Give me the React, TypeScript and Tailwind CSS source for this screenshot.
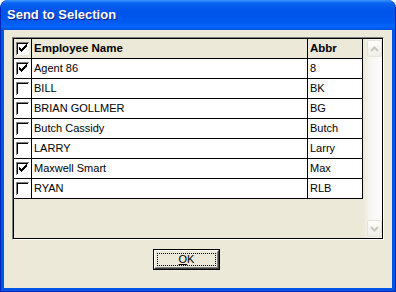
import React from 'react';

interface Employee {
  name: string;
  abbr: string;
  checked: boolean;
}

const employees: Employee[] = [
  { name: 'Agent 86', abbr: '8', checked: true },
  { name: 'BILL', abbr: 'BK', checked: false },
  { name: 'BRIAN GOLLMER', abbr: 'BG', checked: false },
  { name: 'Butch Cassidy', abbr: 'Butch', checked: false },
  { name: 'LARRY', abbr: 'Larry', checked: false },
  { name: 'Maxwell Smart', abbr: 'Max', checked: true },
  { name: 'RYAN', abbr: 'RLB', checked: false },
];

// classic 3px-tall check mark, one column at a time
const checkCols: [number, number][] = [
  [3, 5], [4, 6], [5, 7], [6, 6], [7, 5], [8, 4], [9, 3], [10, 2],
];

const CheckBox: React.FC<{ checked: boolean }> = ({ checked }) => (
  <svg width="13" height="13" viewBox="0 0 13 13" shapeRendering="crispEdges">
    <rect x="0" y="0" width="13" height="13" fill="#fff" />
    <rect x="0" y="0" width="13" height="1" fill="#808080" />
    <rect x="0" y="0" width="1" height="13" fill="#808080" />
    <rect x="1" y="1" width="11" height="1" fill="#000" />
    <rect x="1" y="1" width="1" height="11" fill="#000" />
    <rect x="1" y="12" width="12" height="1" fill="#fff" />
    <rect x="12" y="1" width="1" height="12" fill="#fff" />
    {checked &&
      checkCols.map(([x, y]) => <rect key={x} x={x} y={y} width="1" height="3" fill="#000" />)}
  </svg>
);

const ScrollButton: React.FC<{ dir: 'up' | 'down' }> = ({ dir }) => (
  <div className="w-[15px] h-[17px] rounded-[2px] border border-[#E6E4DA] bg-[linear-gradient(to_bottom,#FDFDFB,#EFEEE7)] flex items-center justify-center">
    <svg width="9" height="6" viewBox="0 0 9 6">
      <polyline
        points={dir === 'up' ? '1,5 4.5,1.5 8,5' : '1,1 4.5,4.5 8,1'}
        fill="none"
        stroke="#CAC8BB"
        strokeWidth="2"
      />
    </svg>
  </div>
);

export default function App() {
  return (
    <div className="w-[396px] h-[292px] bg-white font-['Liberation_Sans',Arial,sans-serif]">
      <div className="w-full h-full flex flex-col rounded-t-[8px] overflow-hidden bg-[#0055E5] border-x border-b border-[#0028B8]">
        {/* title bar */}
        <div className="h-[30px] shrink-0 flex items-center px-[6px] bg-[linear-gradient(to_bottom,#3D95FF_0%,#0A64F2_10%,#0054EA_35%,#0058EE_70%,#0366FA_90%,#0250E0_100%)]">
          <span className="text-white font-bold text-[13px] [text-shadow:1px_1px_0_#0A1E80]">
            Send to Selection
          </span>
        </div>

        {/* client area */}
        <div className="flex-1 mx-[3px] mb-[3px] bg-[#ECE9D8] flex flex-col pt-[7px] pl-[8px] pr-[8px] text-[11px] text-black">
          <div className="h-[203px] border border-t-[#808080] border-l-[#808080] border-b-white border-r-white">
            <div className="h-full border border-black flex">
              <div className="w-[349px] flex flex-col">
                <div className="h-[20px] flex border-b border-black">
                  <div className="w-[18px] border-r border-black flex items-center pl-[2px]">
                    <CheckBox checked={true} />
                  </div>
                  <div className="w-[276px] border-r border-black flex items-center pl-[2px] font-bold text-[11.5px]">
                    Employee Name
                  </div>
                  <div className="w-[55px] border-r border-black flex items-center pl-[2px] font-bold text-[11.5px]">
                    Abbr
                  </div>
                </div>
                {employees.map((e) => (
                  <div key={e.name} className="h-[20px] flex border-b border-black bg-white">
                    <div className="w-[18px] border-r border-black flex items-center pl-[2px]">
                      <CheckBox checked={e.checked} />
                    </div>
                    <div className="w-[276px] border-r border-black flex items-center pl-[2px]">
                      {e.name}
                    </div>
                    <div className="w-[55px] border-r border-black flex items-center pl-[2px]">
                      {e.abbr}
                    </div>
                  </div>
                ))}
              </div>
              <div className="flex-1 flex flex-col justify-between items-end pr-[0px] py-[1px] bg-[linear-gradient(to_right,#ECE9D8,#F4F3EE_30%,#FEFEFE)]">
                <ScrollButton dir="up" />
                <ScrollButton dir="down" />
              </div>
            </div>
          </div>

          <button className="mt-[9px] ml-[141px] w-[67px] h-[21px] border border-black bg-[#ECE9D8] p-0">
            <div className="w-full h-full border border-t-white border-l-white border-b-[#404040] border-r-[#404040]">
              <div className="w-full h-full border border-t-[#ECE9D8] border-l-[#ECE9D8] border-b-[#808080] border-r-[#808080] p-[1px]">
                <div className="w-full h-full border border-dotted border-black flex items-center justify-center">
                  <span className="text-[11px]">
                    <span className="underline">O</span>K
                  </span>
                </div>
              </div>
            </div>
          </button>
        </div>
      </div>
    </div>
  );
}
